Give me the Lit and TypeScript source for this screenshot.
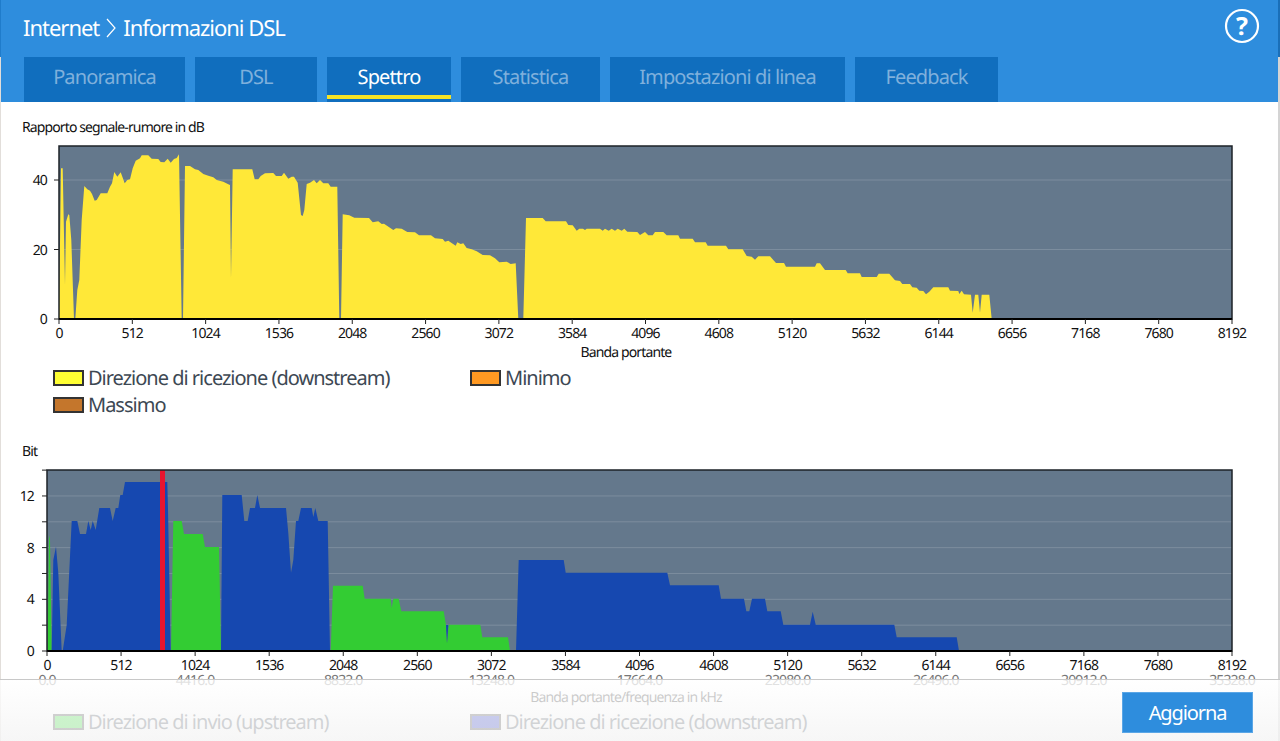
import { LitElement, html, css, svg } from "lit";
import { customElement } from "lit/decorators.js";

const YELLOW = `59,319 61,168.3 62.7,168.3 65,285 66,221.7 68.3,214.3 69.3,215 71.3,240 74,319 75.3,319 77.3,290 79.3,280 81.7,220 84.3,186 87.3,189.3 90,190.7 92,194 94.7,200.7 96.7,200 100.7,193.3 107.3,193.3 110,186.7 112,183.3 114.3,172 117.3,176.7 120.7,172.3 124.7,183.3 127.3,180 130,179.3 132.7,168.3 135.7,160.7 140,158.3 141.7,155.3 148.3,155.3 151.7,158.7 158.3,159 160.7,162 164.3,162.3 167.7,158.7 170.7,162.7 174,159 176.7,158 179,154.3 181.7,319 183,319 185,166 190,166 195,169.3 198.3,170 203.3,174 208.3,175.7 213.3,177.3 216.7,180 223.3,181.7 228.3,184.3 230,185 231,278.3 232.7,169.3 252.3,169.3 254.7,179.3 258.3,179.3 260.7,176 265,173.3 273.3,173 276,176 281.7,176 284,172.7 288.3,178.7 291.7,176.7 294,176.7 297.7,182.7 301,215 302.7,216 304.3,210 306.7,184 310,182.7 314,180 316.7,183.3 320,180 323.3,183.3 328.3,183.3 330.7,186.7 337.3,186.7 339.3,319 341,319 342.7,214.3 349.3,215.3 354.3,217.7 369,218 372.7,222.3 378.3,221.3 381.7,224 384,223.7 393.3,230 396,228.3 401.7,228.7 407.3,232 415,232.3 419,235.3 431,235.3 435,238.3 442.7,239 445,241.7 448.3,240.7 455.7,245.7 457.3,242.3 460.7,244 463.3,243.3 466.7,248 471.7,249.3 476.7,251.3 482.7,255 490,255.3 495,258.3 499.3,262.3 506.7,261.7 510.7,264 515.7,263.3 518.3,319 523.3,319 526,218 542.7,218 545.7,221.3 566,221.3 568.3,225 572.7,225.3 576.7,230.7 579.3,228.7 583,228.7 585,230 586.7,228.7 600,228.7 602.7,230.7 605,228.7 608.7,230.7 611.7,228.7 615,230.7 617.7,228.7 621.7,230.7 624.3,228.7 627.3,231.7 637.3,232 640,235 645,232 648.3,235.3 652.7,235.3 655,232 663.3,232 666.7,235.3 678.3,235.3 680,238.7 692.7,238.7 695,242.3 705.7,242.3 707.7,245.7 726,245.7 728.3,249.3 742.7,249.3 746.7,256 751.7,256.7 755,259.7 758.3,256.3 770,256.3 773.3,260 776,263 784,263 786,266.7 815,266.7 816.7,263.3 820,263.3 825,270 845.7,270 847.7,273.3 860,273.3 861.7,277 876.7,277 878.7,273.7 889.3,273.7 895,280.3 900,281 902.3,284 910,284 912.3,287.3 916.7,287.7 919.3,290.7 923.3,291 926,294.3 929.3,291.7 933.3,287.3 948.3,287.3 950,290.7 958.3,291 959.3,294 961.7,290.7 964,294.3 971,294.7 972.7,312.7 975,294.7 978.3,294.7 980,312.7 981.7,294.7 989.3,294.7 991.7,319`;

const GREEN = [
  `47.7,651 49,535 50,540 51.7,651`,
  `171,651 173.3,521 181.7,521 184,534 202.7,534 205,547 219,547 221,651`,
  `330.7,651 333,585.7 362.7,585.7 364.7,598.7 390.7,598.7 391.7,608 393.3,598.7 398.7,598.7 401.3,611.3 443.7,611.3 446,625 447,643 448.7,624.7 480.3,624.7 482.3,637.3 508,637.3 510,651`,
];

const BLUE = [
  `51.7,651 53.3,560 56,546.7 58.3,573 61.7,651 62.7,651 66.7,625 71.7,521 77.3,521 80,534 86,534 88.3,521 90.7,530 92.7,521 95.7,530 99.3,508 110,508 112.7,521 115.7,508 118.3,508 120.3,495 122.7,495 125,482 167.3,482 168,510 170.7,651`,
  `221,651 222.3,495 241.7,495 244.3,521 247.7,521 250,508 255,508 257.3,495 260,508 286,508 288.3,533 291,572.7 293.3,560 296,521 298.3,521 301,508 311.7,508 313.3,517 315.3,508 318.3,521 327.7,521 330,651`,
  `446,625 448.3,625 447,643`,
  `516,651 518.7,560 563.7,560 565.7,572.7 667.3,572.7 670,585.3 718.7,585.3 721,598.7 744,598.7 746.3,611.3 749.3,611.3 752,598.7 765,598.7 767.3,611.3 780.7,611.3 783.3,624.7 810,624.7 812.7,611.7 815.7,624.7 894.3,624.7 896.7,637.3 956.7,637.3 959,651`,
];

const TICKS = Array.from({ length: 17 }, (_, i) => i * 512);
const KHZ = ["0.0", "4416.0", "8832.0", "13248.0", "17664.0", "22080.0", "26496.0", "30912.0", "35328.0"];

@customElement("app-root")
export class AppRoot extends LitElement {
  static styles = css`
    :host {
      display: block;
      position: relative;
      height: 741px;
      overflow: hidden;
      background: #fff;
      font-family: "Noto Sans", "Open Sans", sans-serif;
      letter-spacing: -0.055em;
      text-rendering: geometricPrecision;
    }
    .top {
      height: 57px;
      background: #2e8ddd;
      display: flex;
      align-items: center;
      justify-content: space-between;
      padding: 0 18px 4px 23px;
      box-sizing: border-box;
      color: #fff;
      border-left: 1px solid #1f7ccb;
      border-right: 2px solid #1a6fb8;
    }
    .crumb {
      display: flex;
      align-items: center;
      gap: 6px;
      font-size: 22px;
      letter-spacing: -0.0465em;
      margin: 2px 0 0 -1px;
    }
    .help { display: block; margin-top: -2px; }
    .help text {
      font-size: 25px;
      font-weight: 700;
      fill: #fff;
      letter-spacing: 0;
    }
    .tabs {
      height: 45px;
      background: #2e8ddd;
      display: grid;
      grid-template-columns: 161px 122px 124px 139px 235px 143px;
      column-gap: 10px;
      padding-left: 24px;
    }
    .tab {
      height: 45px;
      box-sizing: border-box;
      background: #106ebe;
      color: #7fb0dc;
      font-size: 20px;
      display: flex;
      align-items: center;
      justify-content: center;
      position: relative;
      padding-bottom: 6px;
      white-space: nowrap;
    }
    .tab.on { color: #fff; }
    .tab.on::after {
      content: "";
      position: absolute;
      left: 0;
      right: 0;
      bottom: 3px;
      height: 4px;
      background: #f5e325;
    }
    .title {
      font-size: 14px;
      line-height: 16px;
      color: #111;
      padding-left: 22px;
    }
    .snr { margin-top: 18px; }
    .bit { margin-top: 26px; }
    .chart { display: block; width: 1280px; margin-top: 4px; }
    .chart.c1 { height: 224px; }
    .chart.c2 { height: 244px; }
    .chart text {
      font-size: 14px;
      fill: #111;
    }
    .chart text.khz { fill: #777; }
    .chart .grid { stroke: rgba(255, 255, 255, 0.16); stroke-width: 1; }
    .chart .frame { fill: none; stroke: #1d2227; stroke-width: 1.5; }
    .chart .base { stroke: #000; stroke-width: 2; }
    .chart .tick { stroke: #222; stroke-width: 1; }
    .legend {
      display: grid;
      grid-template-columns: 417px 417px;
      grid-auto-rows: 27px;
      padding-left: 53px;
      font-size: 20px;
      letter-spacing: -0.05em;
      color: #3d4853;
    }
    .item { display: flex; align-items: center; gap: 4px; white-space: nowrap; }
    .swatch {
      width: 31px;
      height: 16px;
      box-sizing: border-box;
      border: 2px solid #333;
      flex: none;
    }
    .footer {
      position: absolute;
      left: 0;
      right: 0;
      top: 679px;
      bottom: 0;
      border-top: 1px solid #c8c8c8;
      box-sizing: border-box;
      background: linear-gradient(rgba(255, 255, 255, 0.78), rgba(244, 244, 244, 0.8));
    }
    .update {
      position: absolute;
      left: 1122px;
      top: 12px;
      width: 131px;
      height: 41px;
      box-sizing: border-box;
      border: 1px solid #5aa6e6;
      background: #2e8ddd;
      color: #fff;
      font: inherit;
      letter-spacing: -0.055em;
      font-size: 20px;
      padding: 0;
    }
    .edge {
      position: absolute;
      top: 57px;
      bottom: 0;
      width: 1px;
      background: #e2deda;
    }
    .edge.l { left: 0; }
    .edge.r { right: 0; width: 2px; background: #d4d4d4; }
  `;

  private tabs = ["Panoramica", "DSL", "Spettro", "Statistica", "Impostazioni di linea", "Feedback"];

  private chart1() {
    const x = (v: number) => 59 + (v * 1173) / 8192;
    return html`<svg class="chart c1" viewBox="0 140 1280 224">
      <rect x="59" y="146" width="1173" height="173" fill="#64788c"></rect>
      ${[180, 249.5].map((y) => svg`<line class="grid" x1="59" x2="1232" y1=${y} y2=${y}></line>`)}
      <polygon points=${YELLOW} fill="#ffe838"></polygon>
      <rect class="frame" x="59" y="146" width="1173" height="173"></rect>
      <line class="base" x1="59" x2="1232" y1="319" y2="319"></line>
      ${[[40, 180], [20, 249.5], [0, 319]].map(
        ([v, y]) => svg`<line class="tick" x1="54" x2="59" y1=${y} y2=${y}></line>
          <text x="47" y=${y + 5} text-anchor="end">${v}</text>`
      )}
      ${TICKS.map(
        (v) => svg`<line class="tick" x1=${x(v)} x2=${x(v)} y1="319" y2="324"></line>
          <text x=${x(v)} y="338" text-anchor="middle">${v}</text>`
      )}
      <text x="626" y="357" text-anchor="middle">Banda portante</text>
    </svg>`;
  }

  private chart2() {
    const x = (v: number) => 47 + (v * 1185) / 8192;
    const y = (b: number) => 651 - b * 12.92;
    return html`<svg class="chart c2" viewBox="0 464 1280 244">
      <rect x="47" y="470" width="1185" height="181" fill="#64788c"></rect>
      ${[2, 4, 6, 8, 10, 12].map((b) => svg`<line class="grid" x1="47" x2="1232" y1=${y(b)} y2=${y(b)}></line>`)}
      ${GREEN.map((p) => svg`<polygon points=${p} fill="#33cc33"></polygon>`)}
      ${BLUE.map((p) => svg`<polygon points=${p} fill="#1648b0"></polygon>`)}
      <rect x="160" y="470" width="5" height="181" fill="#e8152f"></rect>
      <rect class="frame" x="47" y="470" width="1185" height="181"></rect>
      <line class="base" x1="47" x2="1232" y1="651" y2="651"></line>
      ${[0, 2, 4, 6, 8, 10, 12, 14].map(
        (b) => svg`<line class="tick" x1="42" x2="47" y1=${y(b)} y2=${y(b)}></line>
          ${b % 4 === 0 && b < 14 ? svg`<text x="34" y=${y(b) + 5} text-anchor="end">${b}</text>` : ""}`
      )}
      ${TICKS.map(
        (v) => svg`<line class="tick" x1=${x(v)} x2=${x(v)} y1="651" y2="656"></line>
          <text x=${x(v)} y="670" text-anchor="middle">${v}</text>`
      )}
      ${KHZ.map((k, i) => svg`<text class="khz" x=${x(i * 1024)} y="685" text-anchor="middle">${k}</text>`)}
      <text x="626" y="702" text-anchor="middle">Banda portante/frequenza in kHz</text>
    </svg>`;
  }

  render() {
    return html`
      <div class="top">
        <div class="crumb">
          <span>Internet</span>
          <svg width="12" height="22" viewBox="0 0 12 22">
            <path d="M2 2 L10 11 L2 20" fill="none" stroke="#fff" stroke-width="1.2"></path>
          </svg>
          <span>Informazioni DSL</span>
        </div>
        <svg class="help" width="36" height="36" viewBox="0 0 36 36">
          <circle cx="18" cy="18" r="16" fill="none" stroke="#fff" stroke-width="2.2"></circle>
          <text x="18" y="27" text-anchor="middle">?</text>
        </svg>
      </div>
      <div class="tabs">
        ${this.tabs.map((t) => html`<div class="tab ${t === "Spettro" ? "on" : ""}">${t}</div>`)}
      </div>
      <div class="title snr">Rapporto segnale-rumore in dB</div>
      ${this.chart1()}
      <div class="legend">
        <div class="item"><span class="swatch" style="background:#ffff33"></span>Direzione di ricezione (downstream)</div>
        <div class="item"><span class="swatch" style="background:#ff9922"></span>Minimo</div>
        <div class="item"><span class="swatch" style="background:#c4762c"></span>Massimo</div>
      </div>
      <div class="title bit">Bit</div>
      ${this.chart2()}
      <div class="legend">
        <div class="item"><span class="swatch" style="background:#22dd22"></span>Direzione di invio (upstream)</div>
        <div class="item"><span class="swatch" style="background:#1020c0"></span>Direzione di ricezione (downstream)</div>
      </div>
      <div class="edge l"></div>
      <div class="edge r"></div>
      <div class="footer"><button class="update">Aggiorna</button></div>
    `;
  }
}
